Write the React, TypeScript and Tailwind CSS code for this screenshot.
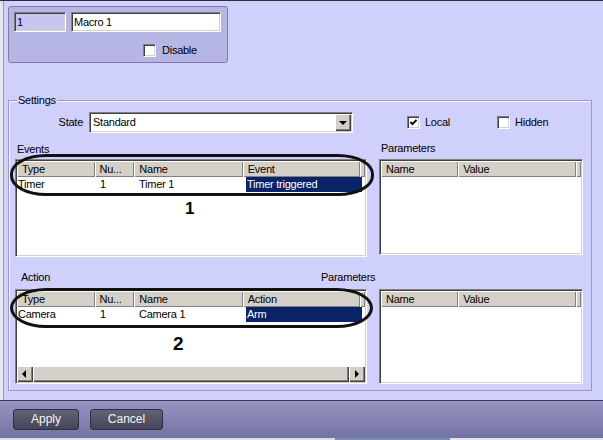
import React from "react";

const sunken =
  "border border-t-[#808080] border-l-[#808080] border-b-white border-r-white shadow-[inset_1px_1px_0_#404040,inset_-1px_-1px_0_#d4d0c8]";
const raised =
  "bg-[#d4d0c8] shadow-[inset_1px_1px_0_#ffffff,inset_-1px_-1px_0_#404040,inset_-2px_-2px_0_#808080]";
const headCell =
  "h-full bg-[#d4d0c8] shadow-[inset_1px_1px_0_#ffffff,inset_-1px_-1px_0_#808080] pl-[5px] leading-[16px] whitespace-nowrap overflow-hidden";

function CheckBox({ checked = false }: { checked?: boolean }) {
  return (
    <span className={`w-[13px] h-[13px] bg-white shrink-0 flex items-center justify-center ${sunken}`}>
      {checked && (
        <svg width="9" height="9" viewBox="0 0 9 9">
          <path d="M1.5 4 L3.5 6.2 L7.5 1.8" stroke="#000" strokeWidth="1.9" fill="none" />
        </svg>
      )}
    </span>
  );
}

const cols = ["w-[78px]", "w-[40px]", "w-[109px]", "w-[118px]"];

function ListTable({
  head,
  row,
  children,
  size,
}: {
  head: string[];
  row: string[];
  children?: React.ReactNode;
  size: string;
}) {
  return (
    <div className={`${size} bg-white p-[1px] flex flex-col overflow-hidden ${sunken}`}>
      <div className="flex h-[16px] shrink-0">
        {head.map((h, i) => (
          <div key={h} className={`${cols[i]} ${headCell}`}>
            {h}
          </div>
        ))}
        <div className={`flex-1 ${headCell}`} />
      </div>
      <div className="flex h-[15px] leading-[15px] shrink-0">
        <div className="w-[78px] pl-[1px]">{row[0]}</div>
        <div className="w-[40px] pl-[5px]">{row[1]}</div>
        <div className="w-[109px] pl-[4px]">{row[2]}</div>
        <div className="w-[118px] pl-[2px]">
          <div className="h-full bg-[#0a246a] text-white pl-[1px]">{row[3]}</div>
        </div>
      </div>
      {children}
    </div>
  );
}

function ParamsTable({ size }: { size: string }) {
  return (
    <div className={`${size} bg-white p-[1px] flex flex-col overflow-hidden ${sunken}`}>
      <div className="flex h-[16px] shrink-0">
        <div className={`w-[78px] ${headCell}`}>Name</div>
        <div className={`w-[119px] ${headCell}`}>Value</div>
        <div className={`flex-1 ${headCell}`} />
      </div>
    </div>
  );
}

function Arrow({ dir }: { dir: "left" | "right" | "down" }) {
  const d =
    dir === "left" ? "M5 0 L1 4 L5 8 Z" : dir === "right" ? "M2 0 L6 4 L2 8 Z" : "M0 2 L8 2 L4 6 Z";
  return (
    <svg width="8" height="8" viewBox="0 0 8 8">
      <path d={d} fill="#000" />
    </svg>
  );
}

export default function App() {
  return (
    <div className="relative w-[603px] h-[440px] overflow-hidden flex flex-col bg-[#d0d0fc] border-t border-[#2c2c3c] shadow-[inset_3px_0_0_#e6e6ee,inset_4px_0_0_#9a9ab0] font-['Liberation_Sans',Arial,sans-serif] text-[11px] tracking-[-0.25px] text-black">
      <div className="flex-1 flex flex-col">
        {/* Macro header */}
        <div className="ml-[8px] mt-[5px] w-[220px] h-[57px] rounded-[3px] border border-[#7c7ca6] bg-[#b6b6e4] pl-[5px] pt-[5px]">
          <div className="flex gap-[5px]">
            <div className={`w-[52px] h-[20px] bg-[#c6c6ee] pl-[2px] leading-[18px] ${sunken}`}>1</div>
            <div className={`w-[150px] h-[20px] bg-white pl-[2px] leading-[18px] ${sunken}`}>Macro 1</div>
          </div>
          <div className="flex items-center gap-[6px] ml-[129px] mt-[12px] h-[13px]">
            <CheckBox />
            <span>Disable</span>
          </div>
        </div>

        {/* Settings group */}
        <fieldset className="ml-[8px] mt-[31px] w-[584px] border border-[#9a9ac0] shadow-[inset_1px_1px_0_#f4f4ff] pb-[6px]">
          <legend className="ml-[8px] px-[1px] leading-[12px] bg-[#d0d0fc]">Settings</legend>

          <div className="flex items-center mt-[6px] h-[21px]">
            <div className="w-[80px] text-right pr-[6px]">State</div>
            <div className={`w-[264px] h-[21px] bg-white p-[1px] flex ${sunken}`}>
              <div className="flex-1 pl-[2px] leading-[17px]">Standard</div>
              <div className={`w-[16px] h-full flex items-center justify-center ${raised}`}>
                <Arrow dir="down" />
              </div>
            </div>
            <div className="ml-[54px] w-[90px] flex items-center gap-[5px]">
              <CheckBox checked />
              <span>Local</span>
            </div>
            <div className="flex items-center gap-[5px]">
              <CheckBox />
              <span>Hidden</span>
            </div>
          </div>

          <div className="flex mt-[9px] h-[13px] leading-[13px] pl-[8px]">
            <div className="w-[364px] pt-[1px]">Events</div>
            <div>Parameters</div>
          </div>

          <div className="flex items-start mt-[4px] pl-[6px] gap-[12px]">
            <ListTable
              size="w-[352px] h-[98px]"
              head={["Type", "Nu...", "Name", "Event"]}
              row={["Timer", "1", "Timer 1", "Timer triggered"]}
            >
              <div className="pl-[168px] pt-[7px] text-[17px] font-bold leading-[20px] tracking-normal">1</div>
            </ListTable>
            <ParamsTable size="w-[204px] h-[96px]" />
          </div>

          <div className="flex mt-[14px] h-[13px] leading-[13px] pl-[12px]">
            <div className="w-[300px]">Action</div>
            <div>Parameters</div>
          </div>

          <div className="flex items-start mt-[5px] pl-[6px] gap-[12px]">
            <ListTable
              size="w-[352px] h-[95px]"
              head={["Type", "Nu...", "Name", "Action"]}
              row={["Camera", "1", "Camera 1", "Arm"]}
            >
              <div className="flex-1">
                <div className="pl-[156px] pt-[11px] text-[19px] font-bold leading-[22px] tracking-normal">2</div>
              </div>
              <div className="h-[16px] flex shrink-0">
                <div className={`w-[16px] h-full flex items-center justify-center ${raised}`}>
                  <Arrow dir="left" />
                </div>
                <div className={`flex-1 h-full ${raised}`} />
                <div className={`w-[16px] h-full flex items-center justify-center ${raised}`}>
                  <Arrow dir="right" />
                </div>
              </div>
            </ListTable>
            <ParamsTable size="w-[204px] h-[95px]" />
          </div>
        </fieldset>
      </div>

      {/* Bottom button bar */}
      <div className="h-[38px] shrink-0 border-t border-[#3c3c58] bg-linear-to-b from-[#9696c4] to-[#7472a2] flex items-start gap-[11px] pl-[13px] pt-[8px]">
        <button className="w-[66px] h-[21px] rounded-[3px] border border-[#2e2e40] bg-linear-to-b from-[#646478] to-[#44445a] text-[#f4f4f4] text-[12px] tracking-normal leading-[19px]">
          Apply
        </button>
        <button className="w-[73px] h-[21px] rounded-[3px] border border-[#2e2e40] bg-linear-to-b from-[#646478] to-[#44445a] text-[#f4f4f4] text-[12px] tracking-normal leading-[19px]">
          Cancel
        </button>
      </div>
      <div className="h-[2px] shrink-0 flex">
        <div className="w-[335px] bg-[#dcdce2]" />
        <div className="w-[115px] bg-[#7a8cb0]" />
        <div className="flex-1 bg-[#e4e4e8]" />
      </div>

      {/* Hand-drawn annotation ellipses */}
      <div className="absolute left-[10px] top-[153px] w-[364px] h-[42px] rounded-[36px/20px] border-[3px] border-[#111]" />
      <div className="absolute left-[10px] top-[287px] w-[363px] h-[40px] rounded-[36px/20px] border-[3px] border-[#111]" />
    </div>
  );
}
